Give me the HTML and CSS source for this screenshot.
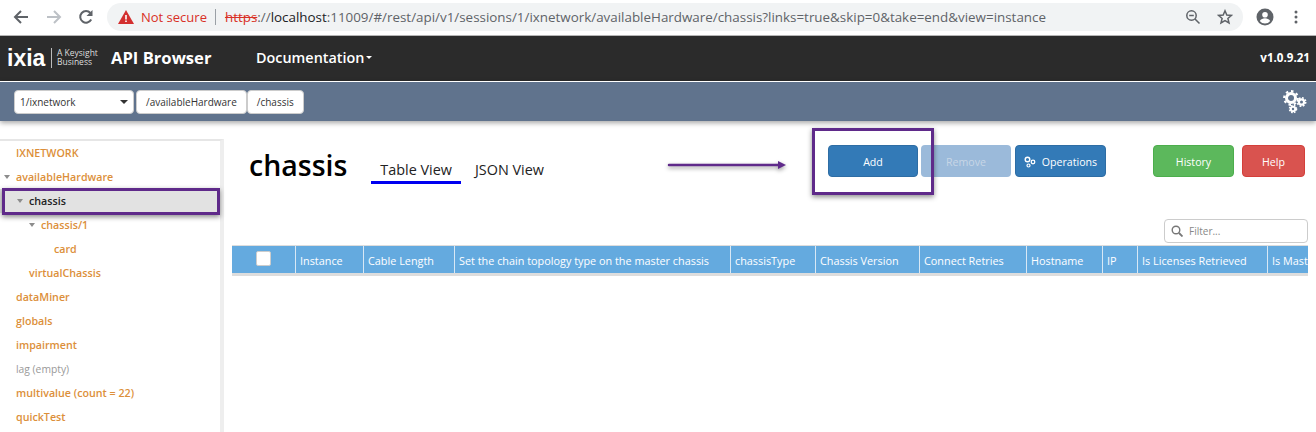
FILE: index.html
```html
<!DOCTYPE html>
<html lang="en">
<head>
<meta charset="utf-8">
<title>API Browser</title>
<link rel="stylesheet" href="styles.css">
</head>
<body>
<div class="page">
  <header class="chrome">
    <svg class="nav-icon" width="16" height="16" viewBox="0 0 16 16"><path d="M15 8H2.5M8 2 2 8l6 6" fill="none" stroke="#5f6368" stroke-width="2"/></svg>
    <svg class="nav-icon fwd" width="16" height="16" viewBox="0 0 16 16"><path d="M1 8h12.5M8 2l6 6-6 6" fill="none" stroke="#bdc1c6" stroke-width="2"/></svg>
    <svg class="nav-icon reload" width="16" height="16" viewBox="0 0 16 16"><path d="M13.2 10.5A5.8 5.8 0 1 1 12.4 4" fill="none" stroke="#5f6368" stroke-width="2"/><path d="M14.5 1v6h-6z" fill="#5f6368"/></svg>
    <div class="omnibox">
      <svg width="16" height="14" viewBox="0 0 16 14" class="warn"><path d="M8 0 16 14H0z" fill="#d32f2f"/><path d="M7.2 5h1.6v4.6H7.2zM7.2 10.5h1.6v1.6H7.2z" fill="#fff"/></svg>
      <span class="not-secure">Not secure</span>
      <span class="omni-sep"></span>
      <span class="url"><s class="https">https</s><span class="dim">://</span>localhost<span class="dim">:11009/#/rest/api/v1/sessions/1/ixnetwork/availableHardware/chassis?links=true&amp;skip=0&amp;take=end&amp;view=instance</span></span>
      <svg class="omni-icon zoom" width="16" height="16" viewBox="0 0 16 16"><circle cx="6.5" cy="6.5" r="4.7" fill="none" stroke="#5f6368" stroke-width="1.5"/><path d="M10 10l4.5 4.5M4.2 6.500h4.600" stroke="#5f6368" stroke-width="1.5"/></svg>
      <svg class="omni-icon star" width="16" height="16" viewBox="0 0 16 16"><path d="M8 1.8 9.800 6l4.600.4-3.500 3 1.100 4.500L8 11.500l-4 2.400 1.100-4.500-3.500-3L6.200 6z" fill="none" stroke="#5f6368" stroke-width="1.500"/></svg>
    </div>
    <svg class="profile" width="18" height="18" viewBox="0 0 18 18"><circle cx="9" cy="9" r="8.500" fill="#5f6368"/><circle cx="9" cy="6.800" r="2.800" fill="#fff"/><path d="M3.800 13c1-2 3.200-2.800 5.200-2.800s4.200.8 5.200 2.800a6.500 6.500 0 0 1-10.400 0z" fill="#fff"/></svg>
    <svg class="menu-dots" width="4" height="14" viewBox="0 0 4 14"><circle cx="2" cy="2" r="1.500" fill="#5f6368"/><circle cx="2" cy="7" r="1.500" fill="#5f6368"/><circle cx="2" cy="12" r="1.500" fill="#5f6368"/></svg>
  </header>

  <nav class="navbar">
    <div class="logo"><span class="logo-word">ixia</span><span class="logo-tag">A Keysight<br>Business</span></div>
    <span class="brand">API Browser</span>
    <span class="doc">Documentation<i class="caret"></i></span>
    <span class="version">v1.0.9.21</span>
  </nav>

  <div class="crumbbar">
    <div class="crumb select">1/ixnetwork<i class="caret dark"></i></div>
    <div class="crumb hw">/availableHardware</div>
    <div class="crumb">/chassis</div>
    <svg class="gears" width="24" height="24" viewBox="0 0 24 24">
      <circle cx="8" cy="8" r="4.500" fill="none" stroke="#fff" stroke-width="3"/>
      <circle cx="8" cy="8" r="6.800" fill="none" stroke="#fff" stroke-width="2.200" stroke-dasharray="2.500 2.800"/>
      <circle cx="18.500" cy="12" r="2.600" fill="none" stroke="#fff" stroke-width="2.200"/>
      <circle cx="18.500" cy="12" r="4.200" fill="none" stroke="#fff" stroke-width="1.600" stroke-dasharray="1.800 1.500"/>
      <circle cx="10" cy="19" r="2.200" fill="none" stroke="#fff" stroke-width="2"/>
      <circle cx="10" cy="19" r="3.600" fill="none" stroke="#fff" stroke-width="1.400" stroke-dasharray="1.600 1.300"/>
    </svg>
  </div>

  <div class="main">
    <aside class="sidebar">
      <ul class="tree">
        <li class="node upper">IXNETWORK</li>
        <li class="node"><i class="tri"></i>availableHardware</li>
        <li class="node lvl1 selected"><i class="tri"></i>chassis</li>
        <li class="node lvl2"><i class="tri"></i>chassis/1</li>
        <li class="node lvl3">card</li>
        <li class="node lvl1">virtualChassis</li>
        <li class="node">dataMiner</li>
        <li class="node">globals</li>
        <li class="node">impairment</li>
        <li class="node empty">lag (empty)</li>
        <li class="node">multivalue (count = 22)</li>
        <li class="node">quickTest</li>
      </ul>
    </aside>
    <section class="content">
      <div class="head">
        <h1 class="title">chassis</h1>
        <div class="tabs">
          <span class="tab active">Table View</span>
          <span class="tab">JSON View</span>
        </div>
        <div class="actions">
          <button class="btn blue add">Add</button>
          <button class="btn faded remove">Remove</button>
          <button class="btn blue ops"><svg width="12" height="12" viewBox="0 0 12 12"><circle cx="3.500" cy="3.500" r="2.300" fill="none" stroke="#fff" stroke-width="1.400"/><circle cx="9" cy="6" r="1.800" fill="none" stroke="#fff" stroke-width="1.300"/><circle cx="4.500" cy="9.500" r="1.500" fill="none" stroke="#fff" stroke-width="1.200"/></svg>Operations</button>
          <button class="btn green history">History</button>
          <button class="btn red help">Help</button>
        </div>
      </div>
      <div class="filter-row">
        <div class="filter">
          <svg width="12" height="12" viewBox="0 0 12 12"><circle cx="5" cy="5" r="3.800" fill="none" stroke="#777" stroke-width="1.400"/><path d="M8 8l3.500 3.500" stroke="#777" stroke-width="1.800"/></svg>
          <span>Filter...</span>
        </div>
      </div>
      <div class="table-wrap">
        <div class="thead">
          <div class="th c0"><span class="check"></span></div>
          <div class="th c1">Instance</div>
          <div class="th c2">Cable Length</div>
          <div class="th c3">Set the chain topology type on the master chassis</div>
          <div class="th c4">chassisType</div>
          <div class="th c5">Chassis Version</div>
          <div class="th c6">Connect Retries</div>
          <div class="th c7">Hostname</div>
          <div class="th c8">IP</div>
          <div class="th c9">Is Licenses Retrieved</div>
          <div class="th c10">Is Master Chassis</div>
        </div>
      </div>
    </section>
  </div>

  <div class="mark mark-add"></div>
  <div class="mark mark-tree"></div>
  <svg class="mark-arrow" width="122" height="12" viewBox="0 0 122 12"><path d="M2 6h110" stroke="#5f2a8a" stroke-width="2.500" stroke-linecap="round"/><path d="M111 2 119 6l-8 4z" fill="#5f2a8a"/></svg>
</div>
</body>
</html>
```
FILE: styles.css
```css
* { box-sizing: border-box; }
html, body { margin: 0; padding: 0; }
body { font-family: "Open Sans", sans-serif; background: #fff; overflow: hidden; }
.page { position: relative; width: 1316px; height: 432px; overflow: hidden; }

/* browser chrome */
.chrome { height: 36px; display: flex; align-items: center; background: #fff; border-bottom: 1px solid #b5b5b5; padding: 0 0 1px 13px; }
.nav-icon { flex: none; margin-right: 17px; }
.nav-icon.fwd { margin-left: 0; margin-right: 16px; }
.nav-icon.reload { margin-right: 13px; }
.omnibox { width: 1136px; height: 28px; border-radius: 14px; background: #f1f3f4; display: flex; align-items: center; padding-left: 11px; flex: none; }
.warn { flex: none; }
.not-secure { color: #d93025; font-size: 13px; margin-left: 7px; }
.omni-sep { width: 1px; height: 16px; background: #9aa0a6; margin: 0 9px 0 8px; }
.url { font-size: 13.4px; color: #202124; white-space: nowrap; flex: 1; }
.https { color: #d93025; }
.dim { color: #5f6368; }
.omni-icon.zoom { margin-right: 16px; flex: none; }
.omni-icon.star { margin-right: 10px; flex: none; }
.profile { flex: none; margin-left: 13px; }
.menu-dots { flex: none; margin-left: 20px; }

/* navbar */
.navbar { height: 45px; background: #2b2b2b; display: flex; align-items: center; color: #fff; padding-bottom: 2px; }
.logo { display: flex; align-items: center; margin-left: 7px; width: 104px; flex: none; }
.logo-word { font-size: 23px; font-weight: 700; line-height: 20px; font-family: "Liberation Sans", sans-serif; width: 44px; }
.logo-tag { font-size: 8.500px; line-height: 9px; border-left: 1px solid #bbb; padding-left: 5px; color: #ddd; height: 20px; white-space: nowrap; }
.brand { font-size: 16.600px; font-weight: 700; width: 145px; flex: none; }
.doc { font-size: 14.400px; font-weight: 600; display: flex; align-items: center; }
.caret { display: inline-block; border-left: 3.500px solid transparent; border-right: 3.500px solid transparent; border-top: 3.500px solid #fff; margin-left: 2px; }
.caret.dark { border-top-color: #333; margin-left: auto; border-left-width: 4px; border-right-width: 4px; border-top-width: 4px; }
.version { margin-left: auto; margin-right: 6px; font-size: 11.600px; font-weight: 700; }

/* breadcrumb bar */
.crumbbar { height: 40px; background: #60738d; border-top: 1px solid #fff; display: flex; align-items: center; padding-left: 14px; box-shadow: 0 2px 5px rgba(0,0,0,.35); position: relative; }
.crumb { height: 24px; background: #fff; border: 1px solid #ccc; border-radius: 4px; font-size: 10px; color: #333; display: flex; align-items: center; padding: 0 9px; }
.crumb.select { width: 120px; padding: 0 5px; margin-right: 2px; }
.gears { margin-left: auto; margin-right: 9px; flex: none; }

/* main */
.main { display: flex; height: 311px; }
.sidebar { width: 224px; flex: none; border-right: 4px solid #eee; margin-top: 18px; border-top: 2px solid #e6e6e6; }
.tree { list-style: none; margin: 0; padding: 0; }
.node { height: 24px; line-height: 24px; font-size: 10.700px; font-weight: 600; color: #dc8f3a; padding-left: 16px; position: relative; white-space: nowrap; }
.lvl1 { padding-left: 29px; }
.lvl2 { padding-left: 41px; }
.lvl3 { padding-left: 54px; }
.selected { background: #e2e2e2; color: #222; }
.empty { font-weight: 400; font-size: 10.300px; color: #999; }
.tri { position: absolute; top: 10px; width: 0; height: 0; border-left: 3.500px solid transparent; border-right: 3.500px solid transparent; border-top: 4px solid #8c8c8c; margin-left: -12px; }

/* content */
.content { flex: 1; min-width: 0; padding-left: 8px; padding-right: 8px; }
.head { display: flex; align-items: flex-start; height: 98px; position: relative; }
.title { margin: 24px 0 0 17px; font-size: 28.500px; font-weight: 600; line-height: 40px; color: #000; }
.tabs { display: flex; margin: 39px 0 0 24px; }
.tab { font-size: 14.400px; line-height: 20px; color: #222; padding: 0 9px 1px; height: 24px; }
.tab.active { border-bottom: 3px solid #0000f0; margin-right: 5px; }
.actions { display: flex; margin-left: auto; margin-top: 24px; padding-right: 3px; }
.btn { height: 32px; border-radius: 4px; border: 1px solid transparent; color: #fff; font: 400 10.600px "Open Sans", sans-serif; display: flex; align-items: center; justify-content: center; padding: 2px 0 0; }
.blue { background: #337ab7; border-color: #2e6da4; }
.faded { background: #9bbada; color: #c7d6e6; }
.green { background: #5cb85c; border-color: #4cae4c; }
.red { background: #d9534f; border-color: #d43f3a; }
.add { width: 90px; margin-right: 3px; }
.remove { width: 90px; margin-right: 4px; }
.ops { width: 91px; margin-right: 47px; }
.ops svg { margin-right: 6px; }
.history { width: 81px; margin-right: 8px; }
.help { width: 63px; }

.filter-row { display: flex; justify-content: flex-end; height: 26px; }
.filter { width: 144px; height: 24px; border: 1px solid #ccc; border-radius: 4px; display: flex; align-items: center; padding-left: 6px; font-size: 10px; color: #888; }
.filter span { margin-left: 6px; }

.table-wrap { overflow: hidden; }
.thead { display: flex; height: 31px; background: #64aadf; border-top: 1px solid #ddd; border-bottom: 3px solid #ddd; width: 1200px; }
.th { color: #fff; font-size: 10.850px; line-height: 29px; padding-left: 4px; border-right: 1px solid #d8e8f5; white-space: nowrap; flex: none; }
.c0 { width: 64px; position: relative; padding: 0; }
.check { position: absolute; left: 24px; top: 5px; width: 15px; height: 15px; background: #fff; border-radius: 2px; border: 1px solid #ccc; }
.c1 { width: 68px; }
.c2 { width: 91px; }
.c3 { width: 276px; }
.c4 { width: 85px; }
.c5 { width: 104px; }
.c6 { width: 107px; }
.c7 { width: 76px; }
.c8 { width: 35px; }
.c9 { width: 130px; }
.c10 { width: 110px; border-right: 0; }

/* annotations */
.mark { position: absolute; border: 3px solid #5f2a8a; box-shadow: 0 2px 5px rgba(0,0,0,.45); pointer-events: none; }
.mark-add { left: 812px; top: 128px; width: 122px; height: 67px; }
.mark-tree { left: 2px; top: 188px; width: 218px; height: 27px; }
.mark-arrow { position: absolute; left: 667px; top: 159px; filter: drop-shadow(0 2px 2px rgba(0,0,0,.4)); }
```
